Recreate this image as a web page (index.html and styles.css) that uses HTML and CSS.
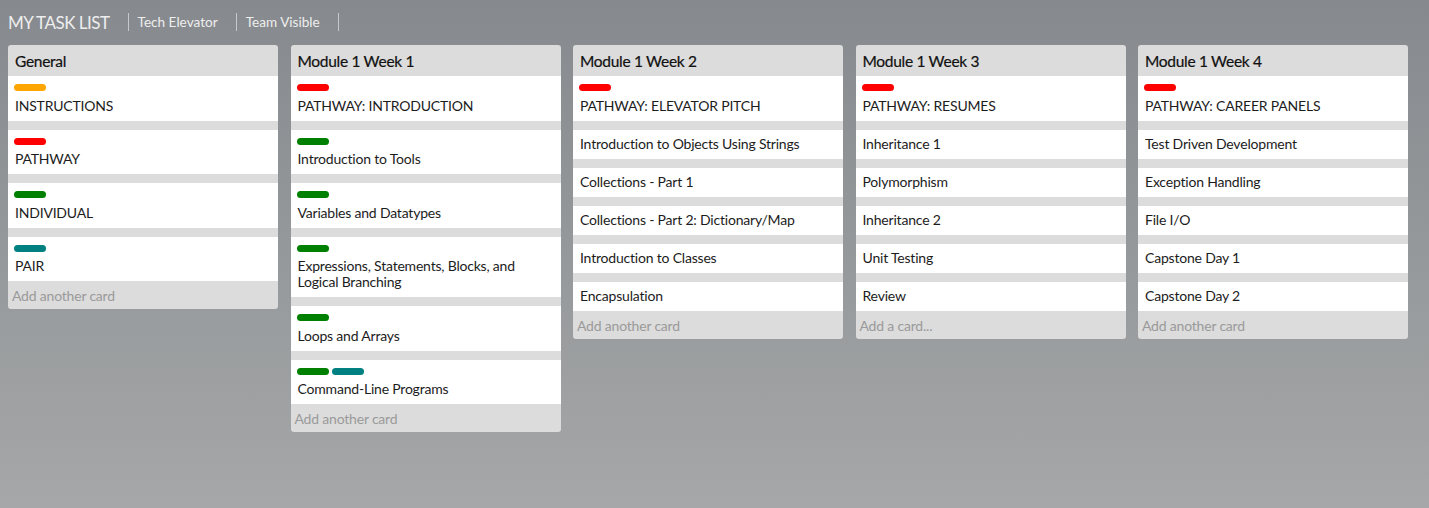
FILE: index.html
```html
<!DOCTYPE html>
<html>
<head>
<meta charset="utf-8">
<link rel="stylesheet" href="styles.css">
</head>
<body>
<nav class="topbar">
  <span class="nav-item brand">MY TASK LIST</span>
  <span class="nav-item">Tech Elevator</span>
  <span class="nav-item">Team Visible</span>
</nav>
<main class="board">
  <section class="list">
    <h2 class="list-title">General</h2>
    <div class="cards">
      <div class="card"><div class="labels"><span class="label orange"></span></div>INSTRUCTIONS</div>
      <div class="card"><div class="labels"><span class="label red"></span></div>PATHWAY</div>
      <div class="card"><div class="labels"><span class="label green"></span></div>INDIVIDUAL</div>
      <div class="card"><div class="labels"><span class="label teal"></span></div>PAIR</div>
    </div>
    <div class="add">Add another card</div>
  </section>
  <section class="list">
    <h2 class="list-title">Module 1 Week 1</h2>
    <div class="cards">
      <div class="card"><div class="labels"><span class="label red"></span></div>PATHWAY: INTRODUCTION</div>
      <div class="card"><div class="labels"><span class="label green"></span></div>Introduction to Tools</div>
      <div class="card"><div class="labels"><span class="label green"></span></div>Variables and Datatypes</div>
      <div class="card"><div class="labels"><span class="label green"></span></div>Expressions, Statements, Blocks, and Logical Branching</div>
      <div class="card"><div class="labels"><span class="label green"></span></div>Loops and Arrays</div>
      <div class="card"><div class="labels"><span class="label green"></span><span class="label teal"></span></div>Command-Line Programs</div>
    </div>
    <div class="add">Add another card</div>
  </section>
  <section class="list">
    <h2 class="list-title">Module 1 Week 2</h2>
    <div class="cards">
      <div class="card"><div class="labels"><span class="label red"></span></div>PATHWAY: ELEVATOR PITCH</div>
      <div class="card">Introduction to Objects Using Strings</div>
      <div class="card">Collections - Part 1</div>
      <div class="card">Collections - Part 2: Dictionary/Map</div>
      <div class="card">Introduction to Classes</div>
      <div class="card">Encapsulation</div>
    </div>
    <div class="add">Add another card</div>
  </section>
  <section class="list">
    <h2 class="list-title">Module 1 Week 3</h2>
    <div class="cards">
      <div class="card"><div class="labels"><span class="label red"></span></div>PATHWAY: RESUMES</div>
      <div class="card">Inheritance 1</div>
      <div class="card">Polymorphism</div>
      <div class="card">Inheritance 2</div>
      <div class="card">Unit Testing</div>
      <div class="card">Review</div>
    </div>
    <div class="add">Add a card...</div>
  </section>
  <section class="list">
    <h2 class="list-title">Module 1 Week 4</h2>
    <div class="cards">
      <div class="card"><div class="labels"><span class="label red"></span></div>PATHWAY: CAREER PANELS</div>
      <div class="card">Test Driven Development</div>
      <div class="card">Exception Handling</div>
      <div class="card">File I/O</div>
      <div class="card">Capstone Day 1</div>
      <div class="card">Capstone Day 2</div>
    </div>
    <div class="add">Add another card</div>
  </section>
</main>
</body>
</html>
```
FILE: styles.css
```css
html {
  min-height: 100%;
  background: linear-gradient(#868a8e, #a5a7a8);
}
body {
  margin: 0;
  padding: 0 8px;
  font-family: Lato, "Open Sans", sans-serif;
  color: #1c1c1c;
  min-height: 508px;
}
.topbar {
  display: flex;
  align-items: center;
  height: 45px;
}
.nav-item {
  color: #eeeeee;
  font-size: 13.6px;
  line-height: 18px;
  padding: 0 18px 0 9px;
  border-right: 1px solid #c6c8ca;
  margin-top: -2px;
}
.nav-item.brand {
  font-size: 17px;
  letter-spacing: -0.5px;
  padding-left: 0;
  padding-top: 2px;
  line-height: 16px;
}
.board {
  display: flex;
  align-items: flex-start;
  gap: 12.5px;
}
.list {
  width: 270px;
  flex: none;
  background: #dcdcdc;
  border-radius: 3px;
  overflow: hidden;
}
.list-title {
  margin: 0;
  font-size: 15.5px;
  font-weight: 400;
  letter-spacing: -0.3px;
  line-height: 17px;
  padding: 8px 7px 6px;
  color: #111;
  -webkit-text-stroke: 0.2px #111;
}
.cards {
  display: flex;
  flex-direction: column;
  gap: 9px;
}
.card {
  background: #fff;
  font-size: 14px;
  letter-spacing: -0.2px;
  line-height: 16px;
  padding: 6px 7px 7px;
}
.labels {
  display: flex;
  gap: 3px;
  margin: 2px 0 6.5px -1px;
}
.label {
  width: 32px;
  height: 7px;
  border-radius: 4px;
}
.orange { background: #ffa500; }
.red { background: #ff0000; }
.green { background: #008000; }
.teal { background: #008080; }
.add {
  font-size: 14px;
  letter-spacing: -0.2px;
  line-height: 16px;
  color: #9a9a9a;
  padding: 7px 4px 5px;
}
```
